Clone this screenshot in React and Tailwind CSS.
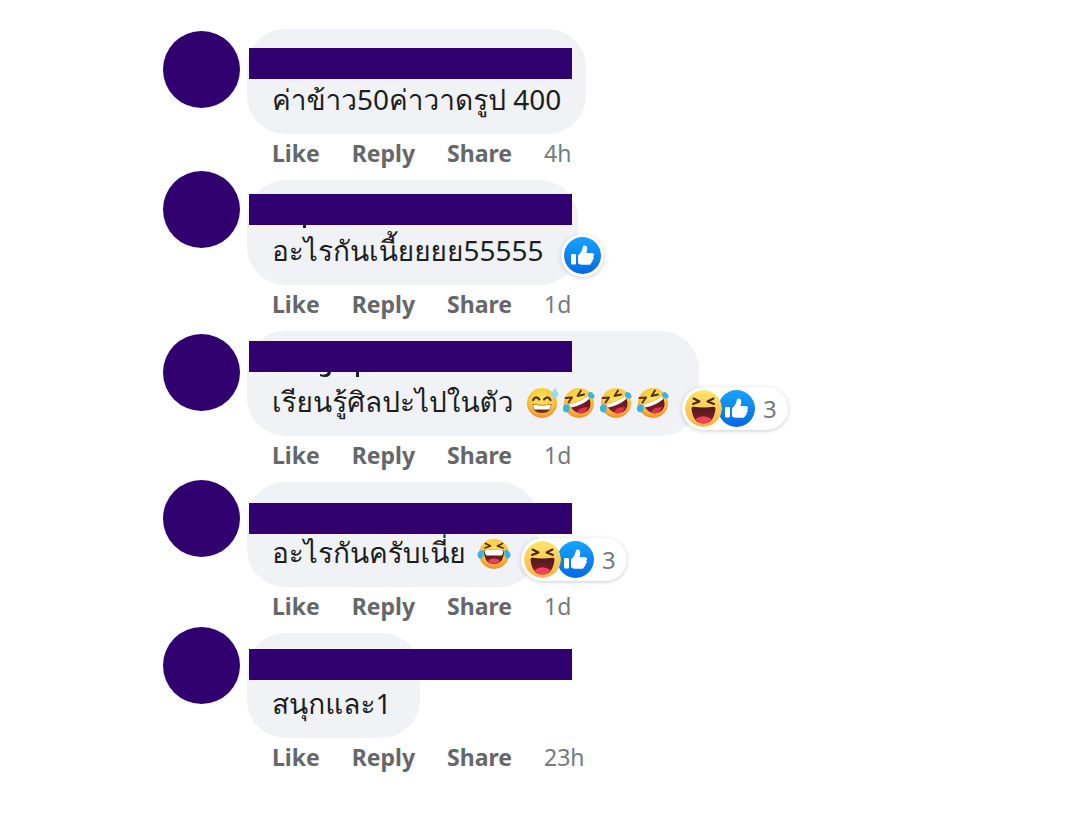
import React from 'react';

const comments = [
  {
    id: 1,
    text: 'ค่าข้าว50ค่าวาดรูป 400',
    time: '4h',
    width: 'w-[339px]',
    avatar: 'top-[2px]',
    bar: 'top-[19px]',
  },
  {
    id: 2,
    text: 'อะไรกันเนี้ยยยย55555',
    time: '1d',
    width: 'w-[331px]',
    avatar: '-top-[9px]',
    bar: 'top-[14px]',
    marks: 'M56 44h3v4h-3z',
    reactions: ['like'],
  },
  {
    id: 3,
    text: 'เรียนรู้ศิลปะไปในตัว',
    emojis: ['sweat', 'rofl', 'rofl', 'rofl'],
    time: '1d',
    width: 'w-[452px]',
    avatar: 'top-[3px]',
    bar: 'top-[10px]',
    marks: 'M73 40h11q0 6-6 6-3 0-5-1v-2q6 2 8-2h-8zM109 40h3v6h-3z',
    reactions: ['haha', 'like'],
    count: 3,
  },
  {
    id: 4,
    text: 'อะไรกันครับเนี่ย',
    emojis: ['joy'],
    time: '1d',
    width: 'w-[291px]',
    avatar: '-top-[2px]',
    bar: 'top-[21px]',
    reactions: ['haha', 'like'],
    count: 3,
  },
  {
    id: 5,
    text: 'สนุกและ1',
    time: '23h',
    width: 'w-[173px]',
    avatar: '-top-[6px]',
    bar: 'top-[16px]',
  },
];

// Shared gradients for every face and the like badge
const Gradients = () => (
  <svg className="absolute w-0 h-0" aria-hidden="true">
    <defs>
      <radialGradient id="face" cx="0.5" cy="0.35" r="0.65">
        <stop offset="0" stopColor="#ffe45c" />
        <stop offset="0.65" stopColor="#fdc53f" />
        <stop offset="1" stopColor="#f28a2e" />
      </radialGradient>
      <linearGradient id="haha" x1="0" y1="0" x2="0" y2="1">
        <stop offset="0" stopColor="#ffe56c" />
        <stop offset="1" stopColor="#fcb34b" />
      </linearGradient>
      <linearGradient id="like" x1="0" y1="0" x2="0" y2="1">
        <stop offset="0" stopColor="#18a4fb" />
        <stop offset="1" stopColor="#0568e1" />
      </linearGradient>
      <linearGradient id="mouth" x1="0" y1="0" x2="0" y2="1">
        <stop offset="0" stopColor="#4a1b1f" />
        <stop offset="1" stopColor="#8c1c2b" />
      </linearGradient>
    </defs>
  </svg>
);

const Emoji = ({ type }) => {
  if (type === 'sweat') {
    return (
      <svg viewBox="0 0 32 32" className="w-8 h-8 overflow-visible" role="img" aria-label="sweat smile">
        <circle cx="16" cy="16" r="15" fill="url(#face)" />
        <path d="M7 13q3-5 6.500-.5M18 12.500q3.500-4.500 6.500.5" fill="none" stroke="#573218" strokeWidth="2.200" strokeLinecap="round" />
        <path d="M6.500 17q9.500 2 19 0q0 9-9.500 9t-9.500-9z" fill="#6b2c22" />
        <path d="M7.200 17.600q8.800 1.800 17.600 0q0 4-1.500 5h-14.600q-1.500-1-1.500-5z" fill="#fff" />
        <path d="M29 .5q4 6 3 8.500-1.200 2.500-4 2-3-.8-2.500-4 .5-2.500 3.500-6.500z" fill="#9bdcf3" />
      </svg>
    );
  }
  if (type === 'rofl') {
    return (
      <svg viewBox="0 0 32 32" className="w-8 h-8 overflow-visible" role="img" aria-label="rolling on the floor laughing">
        <circle cx="16" cy="16" r="15" fill="url(#face)" />
        <path d="M2.500 11l6.500-.5-3.500 5M18 3.500l-3.500 5.500 6.500-1.500" fill="none" stroke="#573218" strokeWidth="2" strokeLinecap="round" strokeLinejoin="round" />
        <path d="M6 17Q17 15.500 25 8.500Q31 20 23 25Q12 29.500 6 17z" fill="url(#mouth)" />
        <path d="M6 17Q17 15.500 25 8.500l1.300 3.500Q19 18.500 8 20.500z" fill="#fff" />
        <path d="M14 26q1.500-6 11-6-2 8-11 6z" fill="#d8354c" />
        <path d="M6 18q-5.500-1.500-6 2.500-.5 4.500 3.500 5 4.500-1 2.500-7.500z" fill="#36b5e5" />
        <path d="M25.500 9.500q-1.500-4.500 2.500-4.500 4 2 3.500 5.500-3 2.500-6-1z" fill="#36b5e5" />
      </svg>
    );
  }
  return (
    <svg viewBox="0 0 32 32" className="w-8 h-8 overflow-visible" role="img" aria-label="tears of joy">
      <circle cx="16" cy="16" r="15" fill="url(#face)" />
      <path d="M7.500 5.500l5 2.500-5.500 2M24.500 5.500l-5 2.500 5.500 2" fill="none" stroke="#573218" strokeWidth="1.800" strokeLinecap="round" strokeLinejoin="round" />
      <path d="M6 12.500q10-2 20 0q0 13.500-10 13.500t-10-13.500z" fill="url(#mouth)" />
      <path d="M6.500 12.500q9.500-2 19 0-.5 4-2 5h-15q-1.500-1-2-5z" fill="#fff" />
      <ellipse cx="16" cy="23" rx="5.500" ry="2.500" fill="#ee4058" />
      <path d="M5.500 12q-5.500 0-6 4.500 0 4 3 4 4-1 3-8.500zM26.500 12q5.500 0 6 4.500 0 4-3 4-4-1-3-8.500z" fill="#36b5e5" />
    </svg>
  );
};

const Reaction = ({ type }) => {
  if (type === 'haha') {
    return (
      <svg viewBox="0 0 37 37" className="relative z-10 w-[37px] h-[37px] rounded-full" role="img" aria-label="Haha">
        <circle cx="18.500" cy="18.500" r="18.500" fill="url(#haha)" />
        <path d="M8.500 8.500l6 3-6.500 2.500M28.500 8.500l-6 3 6.500 2.500" fill="none" stroke="#4b280e" strokeWidth="2" strokeLinecap="round" strokeLinejoin="round" />
        <path d="M6.500 18.500q0-2 2-1.800 10 1.600 20 0 2-.2 2 1.800-1.500 15-12 15t-12-15z" fill="url(#mouth)" />
        <path d="M10.500 29q8-5.500 16 0-3 4.500-8 4.500t-8-4.500z" fill="#f3445b" />
      </svg>
    );
  }
  return (
    <svg viewBox="0 0 37 37" className="w-[37px] h-[37px]" role="img" aria-label="Like">
      <circle cx="18.500" cy="18.500" r="18.500" fill="url(#like)" />
      <rect x="7" y="17" width="5" height="10.500" rx="1.200" fill="#fff" />
      <path d="M14 18.500q4-3.500 4.500-7 .2-3 2-3 3 0 2.700 3.800-.2 2-.9 3.700h5.700q2.300.3 2 2.200-.2 1-.9 1.300 1 .8.500 2.200-.4 1-1.300 1.300.6 1-.1 2-.4.600-1.200.8.4 1.700-1.700 1.900h-7q-2.500 0-4.300-1.500z" fill="#fff" />
    </svg>
  );
};

const Reactions = ({ reactions, count }) => (
  <button className={`absolute left-[calc(100%-17px)] flex items-center h-[43px] p-[3px] rounded-full bg-white shadow-[0_1px_4px_rgba(0,0,0,0.2)] ${count ? 'bottom-1.5' : 'bottom-2'}`}>
    <span className="flex -space-x-1">
      {reactions.map(type => (
        <Reaction key={type} type={type} />
      ))}
    </span>
    {count && <span className="px-2 text-[24px] text-[#777a7e]">{count}</span>}
  </button>
);

const Comment = ({ comment }) => (
  <li className="flex gap-[7px] h-[151px]">
    {/* Covered profile picture */}
    <div className="relative w-[77px] shrink-0">
      <span className={`absolute left-0 w-[77px] h-[77px] rounded-full bg-[#31006f] ${comment.avatar}`}></span>
    </div>

    <div>
      <div className={`relative flex items-end h-[105px] px-[25px] pb-3.5 rounded-[38px] bg-[#f0f2f5] ${comment.width}`}>
        <p className="flex items-center gap-3 whitespace-nowrap text-[28px] leading-[42px] text-[#1c1e21]">
          {comment.text}
          {comment.emojis && (
            <span className="flex gap-[5px] pt-1">
              {comment.emojis.map((type, i) => (
                <Emoji key={i} type={type} />
              ))}
            </span>
          )}
        </p>
        {/* Covered name */}
        <span className={`absolute left-[2px] w-[323px] h-[31px] bg-[#31006f] ${comment.bar}`}></span>
        {comment.marks && (
          <svg className="absolute left-0 top-0 w-40 h-12" aria-hidden="true">
            <path d={comment.marks} fill="#1c1e21" />
          </svg>
        )}
        {comment.reactions && <Reactions reactions={comment.reactions} count={comment.count} />}
      </div>

      <div className="flex gap-8 pl-[25px] pt-[3px] text-[23px] leading-8 text-[#65676b]">
        <button className="font-bold">Like</button>
        <button className="font-bold">Reply</button>
        <button className="font-bold">Share</button>
        <span className="text-[#777a7e]">{comment.time}</span>
      </div>
    </div>
  </li>
);

const App = () => (
  <main className="min-h-screen bg-white pt-[29px] pl-[163px] font-['Noto_Sans','Loma',sans-serif]">
    <Gradients />
    <ul>
      {comments.map(comment => (
        <Comment key={comment.id} comment={comment} />
      ))}
    </ul>
  </main>
);

export default App;
